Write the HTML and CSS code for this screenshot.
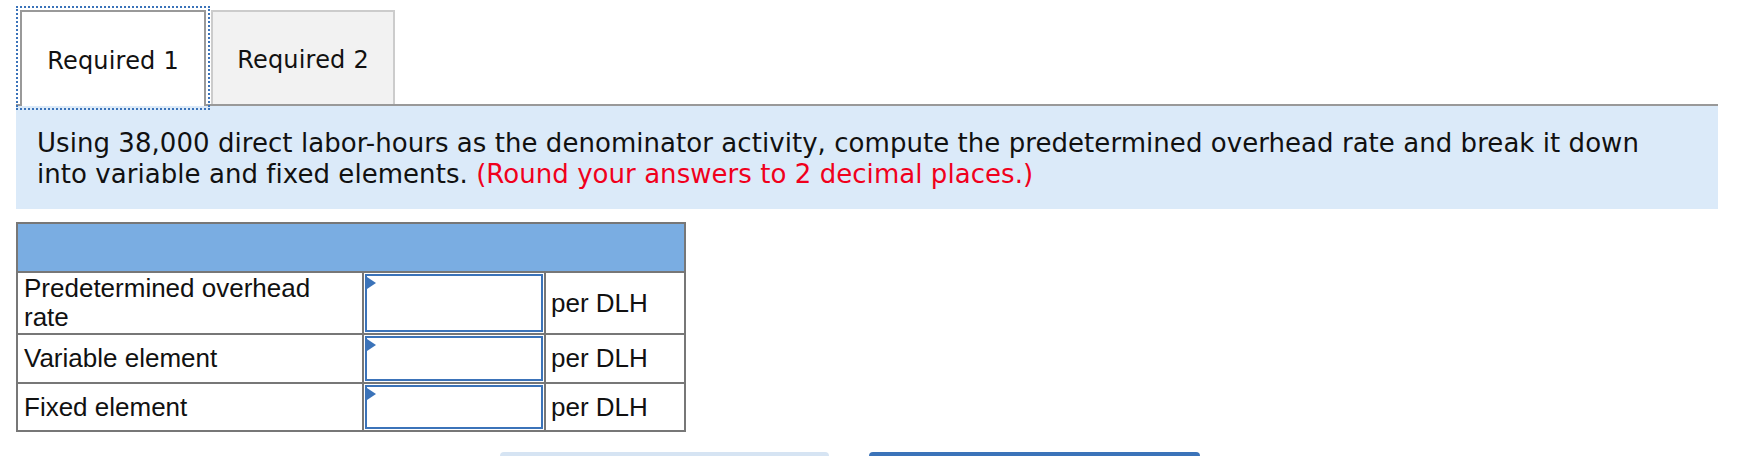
FILE: index.html
```html
<!DOCTYPE html>
<html>
<head>
<meta charset="utf-8">
<link rel="stylesheet" href="styles.css">
</head>
<body>
<div class="page">
  <div class="tabs">
    <div class="tab tab-active">Required 1</div>
    <div class="tab tab-inactive">Required 2</div>
  </div>
  <div class="panel">
    <p class="prompt">Using 38,000 direct labor-hours as the denominator activity, compute the predetermined overhead rate and break it down into variable and fixed elements. <span class="hint">(Round your answers to 2 decimal places.)</span></p>
  </div>
  <table class="grid">
    <colgroup>
      <col class="c1">
      <col class="c2">
      <col class="c3">
    </colgroup>
    <tr class="head"><th colspan="3"></th></tr>
    <tr class="r1">
      <td class="label">Predetermined overhead rate</td>
      <td class="inp"><div class="box"></div></td>
      <td class="unit">per DLH</td>
    </tr>
    <tr class="r2">
      <td class="label">Variable element</td>
      <td class="inp"><div class="box"></div></td>
      <td class="unit">per DLH</td>
    </tr>
    <tr class="r3">
      <td class="label">Fixed element</td>
      <td class="inp"><div class="box"></div></td>
      <td class="unit">per DLH</td>
    </tr>
  </table>
  <div class="buttons">
    <div class="btn btn-light"></div>
    <div class="btn btn-dark"></div>
  </div>
</div>
</body>
</html>
```
FILE: styles.css
```css
html, body {
  margin: 0;
  padding: 0;
  background: #fff;
  overflow: hidden;
}
.page {
  width: 1750px;
  height: 456px;
  overflow: hidden;
}
.tabs {
  display: flex;
  align-items: flex-start;
  margin-left: 16px;
  width: 1702px;
  padding: 10px 0 0 4px;
  box-sizing: border-box;
  border-bottom: 2px solid #999;
  gap: 5px;
  height: 106px;
}
.tab {
  box-sizing: border-box;
  display: flex;
  align-items: center;
  justify-content: center;
  padding-top: 4px;
  font-family: "DejaVu Sans", Verdana, sans-serif;
  font-size: 24px;
  letter-spacing: 0.2px;
  color: #111;
}
.tab-active {
  width: 186px;
  height: 96px;
  background: #fff;
  border: 2px solid #999;
  border-bottom: none;
  outline: 2px dotted #3b73b9;
  outline-offset: 2px;
  position: relative;
  z-index: 1;
}
.tab-inactive {
  width: 184px;
  height: 94px;
  background: #f2f2f2;
  border: 2px solid #ccc;
  border-bottom: none;
}
.panel {
  margin-left: 16px;
  width: 1702px;
  height: 103px;
  background: #dbeaf9;
  box-sizing: border-box;
  padding: 22px 21px 0 21px;
}
.prompt {
  margin: 0;
  font-family: "DejaVu Sans", Verdana, sans-serif;
  font-size: 26px;
  letter-spacing: 0.05px;
  line-height: 31px;
  color: #111;
}
.hint {
  color: #f0001c;
}
.grid {
  margin-top: 13px;
  margin-left: 16px;
  border-collapse: collapse;
  table-layout: fixed;
  width: 668px;
  font-family: "Liberation Sans", Arial, sans-serif;
  font-size: 26px;
  color: #111;
}
.c1 { width: 346px; }
.c2 { width: 182px; }
.c3 { width: 140px; }
.grid td, .grid th {
  border: 2px solid #777;
  padding: 0;
}
.head th {
  background: #7aade2;
  height: 47px;
}
.label {
  padding: 1px 6px !important;
  line-height: 29px;
  vertical-align: middle;
}
.inp {
  padding: 1px !important;
}
.unit {
  padding: 0 5px !important;
  line-height: 29px;
}
.box {
  position: relative;
  box-sizing: border-box;
  border: 2px solid #3b73b9;
  width: 100%;
}
.box::before {
  content: "";
  position: absolute;
  left: 0;
  top: 1px;
  border-left: 9px solid #3b73b9;
  border-top: 6px solid transparent;
  border-bottom: 6px solid transparent;
}
.r1 .box { height: 58px; }
.r2 .box { height: 45px; }
.r3 .box { height: 44px; }
.buttons {
  display: flex;
  gap: 40px;
  margin-left: 500px;
  margin-top: 20px;
}
.btn {
  width: 329px;
  height: 40px;
  border-radius: 4px;
}
.btn-light { background: #d6e4f3; }
.btn-dark { background: #3b73b9; width: 331px; }
```
